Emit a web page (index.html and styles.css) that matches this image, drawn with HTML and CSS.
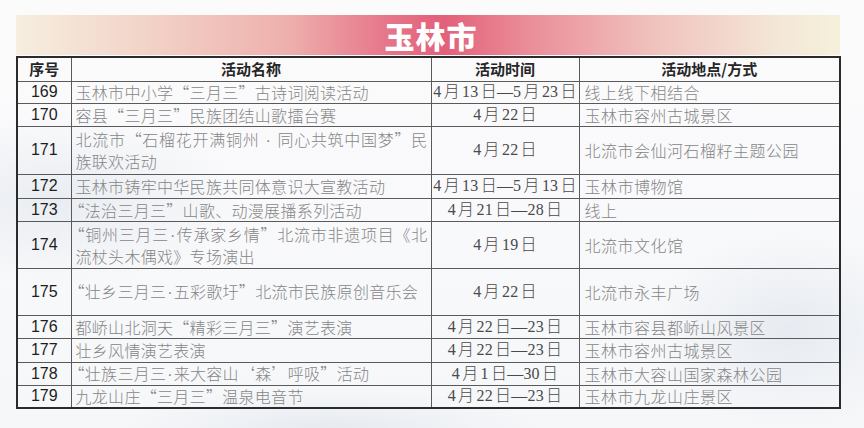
FILE: index.html
```html
<!DOCTYPE html>
<html lang="zh-CN">
<head>
<meta charset="utf-8">
<link rel="stylesheet" href="styles.css">
</head>
<body>
<div class="page">
  <div class="band"><span class="title">玉林市</span></div>
  <table class="tbl">
    <colgroup>
      <col class="c1"><col class="c2"><col class="c3"><col class="c4">
    </colgroup>
    <thead>
      <tr class="h24"><th>序号</th><th>活动名称</th><th>活动时间</th><th>活动地点/方式</th></tr>
    </thead>
    <tbody>
      <tr class="h22"><td class="no">169</td><td class="name">玉林市中小学“三月三”古诗词阅读活动</td><td class="date">4 月 13 日—5 月 23 日</td><td class="loc">线上线下相结合</td></tr>
      <tr class="h23"><td class="no">170</td><td class="name">容县“三月三”民族团结山歌擂台赛</td><td class="date">4 月 22 日</td><td class="loc">玉林市容州古城景区</td></tr>
      <tr class="h48"><td class="no">171</td><td class="name">北流市“石榴花开满铜州<span class="dotw">·</span>同心共筑中国梦”民族联欢活动</td><td class="date">4 月 22 日</td><td class="loc">北流市会仙河石榴籽主题公园</td></tr>
      <tr class="h24"><td class="no">172</td><td class="name">玉林市铸牢中华民族共同体意识大宣教活动</td><td class="date">4 月 13 日—5 月 13 日</td><td class="loc">玉林市博物馆</td></tr>
      <tr class="h23"><td class="no">173</td><td class="name lead">“法治三月三”山歌、动漫展播系列活动</td><td class="date">4 月 21 日—28 日</td><td class="loc">线上</td></tr>
      <tr class="h47"><td class="no">174</td><td class="name lead">“铜州三月三<span class="dot">·</span>传承家乡情”北流市非遗项目《北流杖头木偶戏》专场演出</td><td class="date">4 月 19 日</td><td class="loc">北流市文化馆</td></tr>
      <tr class="h47"><td class="no">175</td><td class="name lead">“壮乡三月三<span class="dot">·</span>五彩歌圩”北流市民族原创音乐会</td><td class="date">4 月 22 日</td><td class="loc">北流市永丰广场</td></tr>
      <tr class="h23"><td class="no">176</td><td class="name">都峤山北洞天“精彩三月三”演艺表演</td><td class="date">4 月 22 日—23 日</td><td class="loc">玉林市容县都峤山风景区</td></tr>
      <tr class="h24"><td class="no">177</td><td class="name">壮乡风情演艺表演</td><td class="date">4 月 22 日—23 日</td><td class="loc">玉林市容州古城景区</td></tr>
      <tr class="h23"><td class="no">178</td><td class="name lead">“壮族三月三<span class="dot">·</span>来大容山‘森’呼吸”活动</td><td class="date">4 月 1 日—30 日</td><td class="loc">玉林市大容山国家森林公园</td></tr>
      <tr class="h23"><td class="no">179</td><td class="name">九龙山庄“三月三”温泉电音节</td><td class="date">4 月 22 日—23 日</td><td class="loc">玉林市九龙山庄景区</td></tr>
    </tbody>
  </table>
</div>
</body>
</html>
```
FILE: styles.css
```css
html, body {
  margin: 0;
  padding: 0;
}
body {
  width: 864px;
  height: 428px;
  overflow: hidden;
  background:
    radial-gradient(ellipse 260px 120px at 60px 200px, rgba(220,226,234,0.55), rgba(255,255,255,0) 70%),
    radial-gradient(ellipse 200px 140px at 790px 330px, rgba(214,222,232,0.5), rgba(255,255,255,0) 70%),
    radial-gradient(ellipse 300px 60px at 330px 430px, rgba(214,222,232,0.5), rgba(255,255,255,0) 70%),
    linear-gradient(180deg, #fbfbfc 0%, #f6f7f9 100%);
  font-family: "Noto Sans CJK SC", sans-serif;
}
.page {
  padding: 15px 0 0 16px;
}
.band {
  width: 824px;
  height: 40px;
  display: flex;
  align-items: center;
  justify-content: center;
  background: linear-gradient(90deg,
    #f6eedf 0%,
    #f2d3c8 16%,
    #eeb0ad 33%,
    #e6768a 45%,
    #e3607a 52%,
    #ea8d98 62%,
    #f0c4be 78%,
    #f3e6d6 92%,
    #f5f0dc 100%);
}
.title {
  font-family: "Noto Sans CJK SC", sans-serif;
  font-weight: 900;
  font-size: 30px;
  line-height: 1;
  color: #fff;
  letter-spacing: 1px;
  margin-left: 6px;
}
.tbl {
  margin-top: 1px;
  width: 823px;
  border-collapse: collapse;
  table-layout: fixed;
  border: 2px solid #2b2b2b;
}
.c1 { width: 54px; }
.c2 { width: 360px; }
.c3 { width: 148px; }
.c4 { width: 261px; }
.tbl th, .tbl td {
  border: 1px solid #5a5a5a;
  padding: 0;
  vertical-align: middle;
  line-height: 20px;
}
.tbl th {
  font-family: "Noto Sans CJK SC", sans-serif;
  font-weight: 700;
  font-size: 15px;
  color: #262626;
  text-align: center;
  line-height: 18px;
}
.h22 { height: 22px; }
.h23 { height: 23px; }
.h24 { height: 24px; }
.h47 { height: 47px; }
.h48 { height: 48px; }
.tbl td.no {
  font-family: "Liberation Sans", Arial, sans-serif;
  font-size: 16px;
  color: #1e1e1e;
  text-align: center;
}
.tbl td.name {
  font-family: "Noto Sans CJK SC", sans-serif;
  font-size: 16px;
  font-weight: 300;
  letter-spacing: 0.3px;
  color: #868686;
  line-height: 20px;
  text-align: justify;
  padding: 0 3px 0 4px;
}
.tbl td.lead {
  text-indent: -7px;
}
.dot {
  font-family: "Liberation Sans", sans-serif;
  letter-spacing: 0;
  margin: 0 1px;
}
.dotw {
  font-family: "Liberation Sans", sans-serif;
  margin: 0 6px;
}
.tbl td.date {
  font-family: "Liberation Serif", "Noto Sans CJK SC", serif;
  font-size: 16px;
  font-weight: 300;
  color: #4a4a4a;
  text-align: center;
  white-space: nowrap;
  word-spacing: -2px;
  letter-spacing: 0.2px;
}
.tbl td.loc {
  font-family: "Noto Sans CJK SC", sans-serif;
  font-size: 16px;
  font-weight: 300;
  letter-spacing: 0.5px;
  color: #868686;
  padding-left: 5px;
}
```
